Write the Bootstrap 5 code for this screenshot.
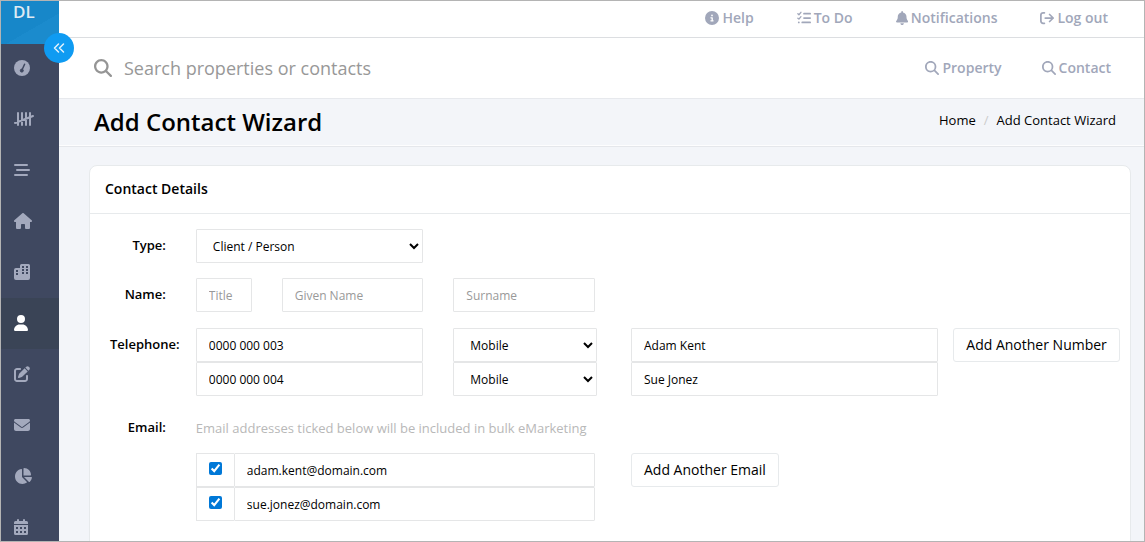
<!DOCTYPE html>
<html lang="en">
<head>
<meta charset="utf-8">
<meta name="viewport" content="width=device-width, initial-scale=1">
<title>Add Contact Wizard</title>
<link rel="stylesheet" href="https://cdn.jsdelivr.net/npm/bootstrap@5.3.0/dist/css/bootstrap.min.css">
<style>
  body { font-family: "Open Sans", "Noto Sans", sans-serif; font-size: 13px; line-height: 20px; color: #000; background: #f3f5f9; }
  a { color: inherit; text-decoration: none; }
  .shell { border: 1px solid #b4b4b4; }
  .glyph { display: block; height: 16px; width: auto; fill: currentColor; flex: none; }
  .glyph.line-art { fill: none; stroke: currentColor; stroke-width: 2; stroke-linecap: round; stroke-linejoin: round; }

  .sidebar { width: 58px; background: #3f4860; color: #a3a9bd; }
  .brand { height: 43px; margin-bottom: -1px; padding: 1px 12px; font-size: 17px; font-weight: 600; color: #dfeaf3; background: linear-gradient(150deg, #1787c9 60%, #1b8bcd 60%); }
  .side-link { height: 51px; padding: 0 0 2px 13px; }
  .side-link.active { background: #3a4456; color: #fff; }
  .collapse-btn { left: 43px; top: 32px; width: 30px; height: 30px; background: #0f9bf2; color: #e4f2fc; z-index: 5; }

  .topbar { height: 37px; padding: 0 36px 2px 0; gap: 43px; border-bottom: 1px solid #dcdee1; }
  .searchbar { height: 61px; padding: 0 33px 0 35px; border-bottom: 1px solid #e7e9ed; }
  .top-link { font-size: 14px; font-weight: 600; color: #a1a7ba; gap: 3px; }
  .top-link .glyph { height: 14px; }
  .search-input, .search-input:focus { font-size: 18px; color: #333; box-shadow: none; }
  .search-input::placeholder { color: #989898; opacity: 1; }
  .search-mark { height: 18px; color: #959595; }

  .page-head { height: 48px; padding: 0 28px 2px 35px; border-bottom: 1px solid #e5e7eb; box-shadow: inset 0 -1px #fdfdfe; }
  .page-head h1 { font-size: 24px; font-weight: 600; line-height: 32px; }
  .breadcrumb { --bs-breadcrumb-divider-color: #ccc; --bs-breadcrumb-item-active-color: #000; --bs-breadcrumb-item-padding-x: 8px; font-size: 13px; }

  .panel { margin: 18px 13px 0 30px; background: #fff; border: 1px solid #e7eaec; border-radius: 8px; }
  .panel-title { height: 48px; padding: 0 15px; font-size: 14px; font-weight: 600; border-bottom: 1px solid #e7eaec; }
  .panel-body { padding: 15px 20px 40px; }
  .panel-body .row { --bs-gutter-x: 30px; }
  .group { margin-bottom: 15px; }
  .group-label { display: block; font-weight: 600; padding-top: 6px; white-space: nowrap; }
  .label-col { display: flex; justify-content: flex-end; }
  .label-col.long { justify-content: flex-start; }

  .field, .field:focus { height: 34px; padding: 6px 12px; font-size: 12px; line-height: 20px; color: #000; background-color: #fff; border: 1px solid #e5e6e7; border-radius: 1px; box-shadow: none; }
  .field::placeholder { color: #999; opacity: 1; }
  select.field { appearance: auto; }
  .kind { min-width: 144px; }
  .person-col { padding-left: 21px; }
  .tick { width: 38px; height: 34px; border: 1px solid #e5e6e7; border-right: 0; padding-bottom: 4px; }
  .tick input { width: 13px; height: 13px; margin: 0; accent-color: #0078d7; }
  .note { color: #b8b8b8; padding-top: 7px; margin-bottom: 15px; }
  .btn-plain { --bs-btn-border-color: #e7eaec; --bs-btn-bg: #fff; --bs-btn-color: #000; --bs-btn-font-size: 14px; --bs-btn-padding-x: 12px; --bs-btn-padding-y: 6px; --bs-btn-line-height: 20px; --bs-btn-border-radius: 3px; --bs-btn-hover-bg: #f3f5f9; --bs-btn-hover-border-color: #d2d2d2; white-space: nowrap; }
</style>
</head>
<body>
<svg width="0" height="0" class="d-none" aria-hidden="true">
  <symbol id="search" viewBox="0 0 512 512"><path d="M416 208c0 45.900-14.900 88.300-40 122.700L502.600 457.400c12.500 12.500 12.500 32.800 0 45.300s-32.800 12.500-45.300 0L330.700 376c-34.400 25.200-76.800 40-122.700 40C93.100 416 0 322.900 0 208S93.100 0 208 0S416 93.100 416 208zM208 352a144 144 0 1 0 0-288 144 144 0 1 0 0 288z"/></symbol>
</svg>

<div class="shell d-flex vh-100 overflow-hidden position-relative">
  <nav class="sidebar flex-shrink-0 overflow-hidden" aria-label="Main">
    <a href="#" class="brand d-block">DL</a>
    <a href="#" class="side-link d-flex align-items-center" aria-label="Dashboard">
      <svg class="glyph" viewBox="0 0 16 16"><circle cx="8" cy="8" r="8"/><g stroke="#3f4860" fill="#3f4860"><path d="M10.600 4.200 8.200 9.500" stroke-width="1.500" stroke-linecap="round"/><circle cx="7.800" cy="10.600" r="1.500"/></g></svg>
    </a>
    <a href="#" class="side-link d-flex align-items-center" aria-label="Tally">
      <svg class="glyph line-art" viewBox="0 0 20 16"><path stroke-width="2" d="M4 2v12M8 2v12M12 2v12M16 2v12M1 12 19 5"/></svg>
    </a>
    <a href="#" class="side-link d-flex align-items-center" aria-label="Lists">
      <svg class="glyph line-art" viewBox="0 0 16 16"><path d="M1 3h12M3 8h12M1 13h12"/></svg>
    </a>
    <a href="#" class="side-link d-flex align-items-center" aria-label="Home">
      <svg class="glyph" viewBox="0 0 576 512"><path d="M575.800 255.500c0 18-15 32.100-32 32.100h-32l.7 160.200c0 2.700-.2 5.400-.5 8.100V472c0 22.100-17.900 40-40 40H392c-22.100 0-40-17.900-40-40V384c0-17.700-14.300-32-32-32H256c-17.700 0-32 14.300-32 32v88c0 22.100-17.900 40-40 40H104c-22.100 0-40-17.900-40-40V287.600H32c-18 0-32-14-32-32.100c0-9 3-17 10-24L266.400 8c7-7 15-8 22-8s15 2 21 7L564.800 231.500c8 7 12 15 11 24z"/></svg>
    </a>
    <a href="#" class="side-link d-flex align-items-center" aria-label="Properties">
      <svg class="glyph" viewBox="0 0 16 16"><path fill-rule="evenodd" d="M6 1.500A1.500 1.500 0 0 1 7.500 0h7A1.500 1.500 0 0 1 16 1.500v12.500a2 2 0 0 1-2 2H2a2 2 0 0 1-2-2V6a2 2 0 0 1 2-2h4zM2 6v2h2V6zM2 9v2h2V9zM8 2v2h2V2zM12 2v2h2V2zM8 5v2h2V5zM12 5v2h2V5zM8 8v2h2V8zM12 8v2h2V8z"/></svg>
    </a>
    <a href="#" class="side-link active d-flex align-items-center" aria-label="Contacts" aria-current="page">
      <svg class="glyph" viewBox="0 0 448 512"><path d="M224 256A128 128 0 1 0 224 0a128 128 0 1 0 0 256zm-45.700 48C79.800 304 0 383.800 0 482.300C0 498.700 13.300 512 29.700 512H418.300c16.400 0 29.700-13.300 29.700-29.700C448 383.800 368.200 304 269.700 304H178.300z"/></svg>
    </a>
    <a href="#" class="side-link d-flex align-items-center" aria-label="Edit">
      <svg class="glyph" viewBox="0 0 512 512"><path d="M471.600 21.700c-21.900-21.900-57.300-21.900-79.200 0L362.300 51.700l97.900 97.900 30.100-30.100c21.900-21.900 21.900-57.300 0-79.200L471.600 21.700zm-299.200 220c-6.100 6.100-10.800 13.600-13.500 21.900l-29.600 88.800c-2.900 8.600-.6 18.100 5.800 24.600s15.900 8.700 24.600 5.800l88.800-29.600c8.200-2.700 15.700-7.400 21.900-13.500L437.700 172.300 339.700 74.300 172.400 241.700zM96 64C43 64 0 107 0 160V416c0 53 43 96 96 96H352c53 0 96-43 96-96V320c0-17.700-14.300-32-32-32s-32 14.300-32 32v96c0 17.700-14.300 32-32 32H96c-17.700 0-32-14.300-32-32V160c0-17.700 14.300-32 32-32h96c17.700 0 32-14.300 32-32s-14.300-32-32-32H96z"/></svg>
    </a>
    <a href="#" class="side-link d-flex align-items-center" aria-label="Mail">
      <svg class="glyph" viewBox="0 0 512 512"><path d="M48 64C21.500 64 0 85.500 0 112c0 15.100 7.100 29.300 19.200 38.400L236.800 313.600c11.400 8.500 27 8.500 38.400 0L492.800 150.400c12.100-9.100 19.200-23.300 19.200-38.400c0-26.500-21.500-48-48-48H48zM0 176V384c0 35.300 28.700 64 64 64H448c35.300 0 64-28.700 64-64V176L294.400 339.200c-22.800 17.100-54 17.100-76.800 0L0 176z"/></svg>
    </a>
    <a href="#" class="side-link d-flex align-items-center" aria-label="Reports">
      <svg class="glyph" viewBox="0 0 576 512"><path d="M304 240V16.600c0-9 7-16.600 16-16.600C443.700 0 544 100.300 544 224c0 9-7.600 16-16.600 16H304zM32 272C32 150.700 122.100 50.300 239 34.300c9.200-1.300 17 6.100 17 15.400V288L412.500 444.500c6.700 6.700 6.200 17.700-1.500 23.100C371.800 495.600 323.800 512 272 512C139.500 512 32 404.600 32 272zm526.400 16c9.300 0 16.600 7.800 15.400 17c-7.700 55.900-34.600 105.600-73.900 142.300c-6 5.600-15.400 5.200-21.200-.7L320 288H558.400z"/></svg>
    </a>
    <a href="#" class="side-link d-flex align-items-center" aria-label="Calendar">
      <svg class="glyph" viewBox="0 0 14 16"><path fill-rule="evenodd" d="M4 0a1 1 0 0 1 1 1v1h4V1a1 1 0 0 1 2 0v1h1.500A1.500 1.500 0 0 1 14 3.500V5H0V3.500A1.500 1.500 0 0 1 1.500 2H3V1a1 1 0 0 1 1-1zM0 6h14v8.500a1.500 1.500 0 0 1-1.500 1.500h-11A1.500 1.500 0 0 1 0 14.500zM2 8v2h2V8zM6 8v2h2V8zM10 8v2h2V8zM2 12v2h2v-2zM6 12v2h2v-2zM10 12v2h2v-2z"/></svg>
    </a>
  </nav>
  <button type="button" class="collapse-btn btn rounded-circle border-0 p-0 position-absolute d-flex align-items-center justify-content-center" aria-label="Collapse menu">
    <svg class="glyph line-art" viewBox="0 0 16 16"><path stroke-width="1.500" d="M7.500 4 3.500 8l4 4M12.500 4l-4 4 4 4"/></svg>
  </button>

  <main class="flex-grow-1 overflow-hidden">
    <div class="topbar bg-white d-flex align-items-center justify-content-end">
      <a href="#" class="top-link d-flex align-items-center"><svg class="glyph" viewBox="0 0 512 512"><path d="M256 512A256 256 0 1 0 256 0a256 256 0 1 0 0 512zM216 336h24V272H216c-13.300 0-24-10.700-24-24s10.700-24 24-24h48c13.300 0 24 10.700 24 24v88h8c13.300 0 24 10.700 24 24s-10.700 24-24 24H216c-13.300 0-24-10.700-24-24s10.700-24 24-24zm40-208a32 32 0 1 1 0 64 32 32 0 1 1 0-64z"/></svg>Help</a>
      <a href="#" class="top-link d-flex align-items-center"><svg class="glyph line-art" viewBox="0 0 16 16"><path stroke-width="1.500" d="M1 3.200 2.200 4.300 4.500 1.500M1 8.200 2.200 9.300 4.500 6.500"/><path d="M8 3h7M8 8h7M6 13h9M2 13h.1"/></svg>To Do</a>
      <a href="#" class="top-link d-flex align-items-center"><svg class="glyph" viewBox="0 0 448 512"><path d="M224 0c-17.700 0-32 14.300-32 32V51.200C119 66 64 130.600 64 208v18.800c0 47-17.300 92.400-48.500 127.600l-7.400 8.300c-8.400 9.400-10.400 22.900-5.300 34.400S19.400 416 32 416H416c12.600 0 24-7.400 29.200-18.900s3.100-25-5.300-34.400l-7.400-8.300C401.300 319.200 384 273.900 384 226.800V208c0-77.400-55-142-128-156.800V32c0-17.700-14.300-32-32-32zm45.300 493.300c12-12 18.700-28.300 18.700-45.300H224 160c0 17 6.700 33.300 18.700 45.300s28.300 18.700 45.300 18.700s33.300-6.700 45.300-18.700z"/></svg>Notifications</a>
      <a href="#" class="top-link d-flex align-items-center"><svg class="glyph line-art" viewBox="0 0 16 16"><path d="M5 2H3.500A2.500 2.500 0 0 0 1 4.500v7A2.500 2.500 0 0 0 3.500 14H5M6 8h9M11 4l4 4-4 4"/></svg>Log out</a>
    </div>
    <div class="searchbar bg-white d-flex align-items-center">
      <label for="q" aria-label="Search"><svg class="glyph search-mark" viewBox="0 0 512 512"><use href="#search"/></svg></label>
      <input id="q" type="search" class="search-input form-control border-0 py-0 flex-grow-1" placeholder="Search properties or contacts">
      <div class="d-flex gap-4 flex-shrink-0">
        <a href="#" class="top-link d-flex align-items-center me-3"><svg class="glyph" viewBox="0 0 512 512"><use href="#search"/></svg>Property</a>
        <a href="#" class="top-link d-flex align-items-center"><svg class="glyph" viewBox="0 0 512 512"><use href="#search"/></svg>Contact</a>
      </div>
    </div>
    <header class="page-head d-flex justify-content-between align-items-center">
      <h1 class="mb-0">Add Contact Wizard</h1>
      <nav aria-label="breadcrumb">
        <ol class="breadcrumb mb-1">
          <li class="breadcrumb-item"><a href="#">Home</a></li>
          <li class="breadcrumb-item active" aria-current="page">Add Contact Wizard</li>
        </ol>
      </nav>
    </header>

    <section class="panel">
      <h2 class="panel-title d-flex align-items-center mb-0">Contact Details</h2>
      <form class="panel-body">
        <div class="row group">
          <div class="col-1 label-col"><label class="group-label" for="type">Type:</label></div>
          <div class="col-3"><select id="type" class="field w-100"><option>Client / Person</option></select></div>
        </div>
        <div class="row mb-3">
          <div class="col-1 label-col"><label class="group-label" for="title">Name:</label></div>
          <div class="col-1"><input id="title" class="field form-control" placeholder="Title"></div>
          <div class="col-2"><input class="field form-control" placeholder="Given Name" aria-label="Given Name"></div>
          <div class="col-2"><input class="field form-control" placeholder="Surname" aria-label="Surname"></div>
        </div>
        <div class="row group">
          <div class="col-1 label-col long"><label class="group-label" for="tel1">Telephone:</label></div>
          <div class="col-3">
            <input id="tel1" type="tel" class="field form-control" value="0000 000 003">
            <input type="tel" class="field form-control" value="0000 000 004" aria-label="Second telephone">
          </div>
          <div class="col-2">
            <select class="field kind w-100 d-block" aria-label="First number type"><option>Mobile</option></select>
            <select class="field kind w-100 d-block" aria-label="Second number type"><option>Mobile</option></select>
          </div>
          <div class="col-4 person-col">
            <input class="field form-control" value="Adam Kent" aria-label="First number owner">
            <input class="field form-control" value="Sue Jonez" aria-label="Second number owner">
          </div>
          <div class="col-2 px-0"><button type="button" class="btn btn-plain">Add Another Number</button></div>
        </div>
        <div class="row">
          <div class="col-1 label-col"><label class="group-label" for="mail1">Email:</label></div>
          <div class="col-11"><p class="note">Email addresses ticked below will be included in bulk eMarketing</p></div>
          <div class="col-5 offset-1">
            <div class="d-flex">
              <span class="tick d-flex flex-shrink-0 align-items-center justify-content-center"><input type="checkbox" checked aria-label="Include first email"></span>
              <input id="mail1" type="email" class="field form-control" value="adam.kent@domain.com">
            </div>
            <div class="d-flex">
              <span class="tick d-flex flex-shrink-0 align-items-center justify-content-center"><input type="checkbox" checked aria-label="Include second email"></span>
              <input type="email" class="field form-control" value="sue.jonez@domain.com" aria-label="Second email">
            </div>
          </div>
          <div class="col-4 person-col"><button type="button" class="btn btn-plain">Add Another Email</button></div>
        </div>
      </form>
    </section>
  </main>
</div>
<script src="https://cdn.jsdelivr.net/npm/bootstrap@5.3.0/dist/js/bootstrap.bundle.min.js"></script>
</body>
</html>
